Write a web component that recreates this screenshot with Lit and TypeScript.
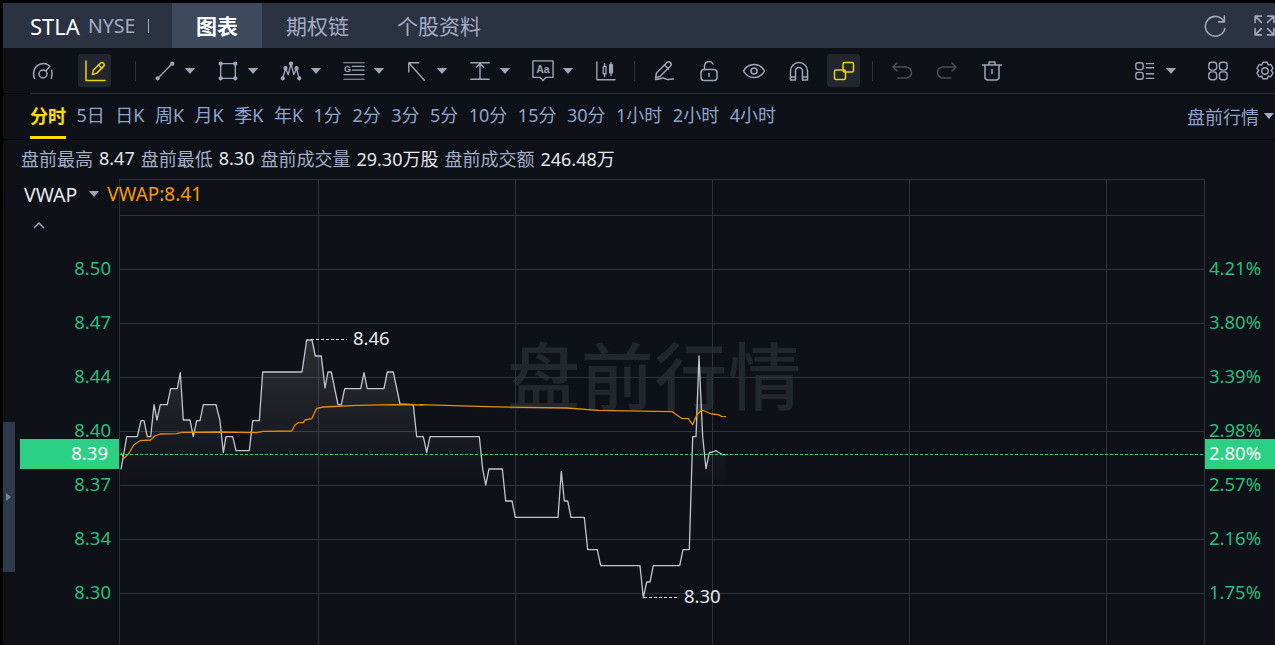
import { LitElement, html, css, svg } from "lit";
import { customElement } from "lit/decorators.js";

const z4 = (p: number[][]) => p.map(([x, y]) => [110 + x / 3, 330 + y / 3]);
const z5 = (p: number[][]) => p.map(([x, y]) => [420 + x / 3, 400 + y / 3]);
const pts = (p: number[][]) => p.map(([x, y]) => `${x.toFixed(1)},${y.toFixed(1)}`).join(" ");

const WHITE = [
  ...z4([[33,418],[50,320],[82,320],[93,272],[102,272],[112,320],[122,320],[132,224],[141,270],[151,224],[172,224],[182,176],[202,176],[211,128],[220,270],[240,270],[250,320],[260,272],[270,272],[280,224],[318,224],[330,272],[340,368],[348,320],[368,320],[378,362],[418,362],[428,272],[448,272],[458,126],[576,126],[590,30],[606,30],[616,78],[634,78],[645,174],[654,126],[664,126],[684,224],[694,224],[704,176],[752,176],[762,128],[772,176],[822,176],[832,126],[850,126],[870,222],[910,224],[920,320],[940,320]]),
  ...z5([[20,158],[30,110],[178,110],[188,207],[197,255],[207,207],[247,207],[257,303],[276,303],[286,352],[414,352],[424,214],[433,303],[443,303],[453,352],[493,352],[503,449],[532,449],[542,497],[660,497],[670,593],[680,546],[690,546],[700,497],[779,497],[789,449],[808,449],[818,110],[828,110],[837,-132],[848,110],[858,206],[868,158],[878,156],[888,152],[898,158],[908,164],[918,164]]),
];
const ORANGE = [
  ...z4([[33,368],[42,385],[55,372],[72,344],[90,332],[122,330],[135,318],[150,312],[200,311],[215,307],[330,306],[440,308],[460,304],[545,303],[555,285],[565,278],[580,278],[585,270],[605,266],[620,235],[640,231],[740,226],[850,224],[940,225]]),
  ...z5([[0,14],[200,20],[440,24],[535,31],[757,35],[770,45],[785,55],[805,56],[818,74],[830,45],[845,30],[875,42],[895,44],[905,49],[918,50]]),
];
const H_LINES = [179, 215, 269, 323, 377, 431, 485, 539, 593];
const V_LINES = [119.5, 318.5, 515.5, 712.5, 909.5, 1106.5, 1204.5];
const LEFT = [["8.50",269],["8.47",323],["8.44",377],["8.40",431],["8.37",485],["8.34",539],["8.30",593]] as const;
const RIGHT = [["4.21%",269],["3.80%",323],["3.39%",377],["2.98%",431],["2.57%",485],["2.16%",539],["1.75%",593]] as const;
const PERIODS = ["5日","日K","周K","月K","季K","年K","1分","2分","3分","5分","10分","15分","30分","1小时","2小时","4小时"];
const INFO = [["盘前最高","8.47"],["盘前最低","8.30"],["盘前成交量","29.30万股"],["盘前成交额","246.48万"]];

const ic = (body: unknown, cls = "") => html`<svg class="ic ${cls}" viewBox="0 0 24 24" fill="none" stroke="currentColor" stroke-width="1.5" stroke-linecap="round" stroke-linejoin="round">${body}</svg>`;

const I = {
  gauge: svg`<path d="M3.5 19.5C1 14 3.5 7 9 5.2 12 4.2 16 4.8 18 6.5M20.5 11c1 3 .8 6-.2 8.5"/><circle cx="12" cy="15" r="4"/><path d="M15 12l4-5"/>`,
  draw: svg`<path d="M3 2v19.500h19"/><path d="M9.500 15.500l.8-4.300 7-7c1-1 2.200-1 3.200 0s1 2.200 0 3.200l-7 7z"/><path d="M15.500 6l3.500 3.500"/>`,
  line: svg`<path d="M5 19L19 5"/><circle cx="4" cy="20" r="1.600" fill="currentColor"/><circle cx="20" cy="4" r="1.600" fill="currentColor"/>`,
  rect: svg`<path d="M4 4h16v16H4z"/><circle cx="4" cy="4" r="1.600" fill="currentColor"/><circle cx="20" cy="4" r="1.600" fill="currentColor"/><circle cx="4" cy="20" r="1.600" fill="currentColor"/><circle cx="20" cy="20" r="1.600" fill="currentColor"/>`,
  zig: svg`<path d="M3 20L6 9l3 7 3-12 3 12 3-7 3 11"/><circle cx="3" cy="20" r="1.600" fill="currentColor"/><circle cx="6" cy="9" r="1.600" fill="currentColor"/><circle cx="12" cy="4" r="1.600" fill="currentColor"/><circle cx="18" cy="9" r="1.600" fill="currentColor"/><circle cx="21" cy="20" r="1.600" fill="currentColor"/>`,
  fib: svg`<text x="1" y="13" font-size="10" font-weight="700" fill="currentColor" stroke="none" font-family="Liberation Sans, sans-serif">G</text><path stroke-width="1.200" d="M1 3h22M10 7h13M10 11h13M1 16h22M1 21h22"/>`,
  arrow: svg`<path d="M3 3l17 19M3 3v10M3 3h11"/>`,
  height: svg`<path d="M2 3h20M2 21h20M12 4v17M8 8l4-4 4 4" />`,
  aa: svg`<path d="M1 1h22v18h-8l-3 3.500-3-3.500H1z"/><text x="12" y="14.500" text-anchor="middle" font-size="11.500" font-weight="700" fill="currentColor" stroke="none" font-family="Liberation Sans, sans-serif">Aa</text>`,
  candle: svg`<path d="M2 2v19.500h20"/><path d="M9 7h3v8H9zM10.500 4v3M10.500 15v3"/><path d="M16 5h3v9h-3z" fill="currentColor"/><path d="M17.500 3v2M17.500 14v3"/>`,
  pen: svg`<path d="M3.500 19l1-5L15 3.500c1-1 2.500-1 3.500 0s1 2.500 0 3.500L8 17.500z"/><path d="M12.500 6l4 4M3.500 20.500c3 0 5-1 7-1.500s3 1.500 5 1.500 4-.5 6-.5"/>`,
  lock: svg`<rect x="4" y="10.500" width="16" height="11" rx="3"/><path d="M7.500 10.500V7a4.500 4.500 0 0 1 8.500-2M12 14.500v3"/>`,
  eye: svg`<path d="M1.500 12C4 7.500 8 5.500 12 5.500s8 2 10.500 6.500C20 16.500 16 18.500 12 18.500S4 16.500 1.500 12z"/><circle cx="12" cy="12" r="3"/>`,
  magnet: svg`<path d="M3.500 21V12a8.500 8.500 0 0 1 17 0v9h-5v-9a3.500 3.500 0 0 0-7 0v9z"/><path d="M3.500 18h5M15.500 18h5"/>`,
  link: svg`<rect x="2.500" y="11" width="11" height="9.500" rx="1.500"/><rect x="11" y="3.500" width="10.500" height="9.500" rx="1.500"/>`,
  undo: svg`<path d="M7 4L3 8l4 4M3 8h13a5.500 5.500 0 0 1 0 11H8"/>`,
  redo: svg`<path d="M17 4l4 4-4 4M21 8H8a5.500 5.500 0 0 0 0 11h8"/>`,
  trash: svg`<path d="M2.500 6h19M9 6V3h6v3M5 6v12a3 3 0 0 0 3 3h8a3 3 0 0 0 3-3V6M12 10.500v4"/>`,
  layout: svg`<rect x="2" y="3" width="8" height="7.500" rx="2.500"/><rect x="2" y="13.500" width="8" height="7.500" rx="2.500"/><path d="M13.500 4h8M13.500 8.500h8M13.500 15h8M13.500 20h8"/>`,
  grid: svg`<rect x="2" y="2.500" width="8.500" height="8.500" rx="3"/><rect x="13.500" y="2.500" width="8.500" height="8.500" rx="3"/><rect x="2" y="13" width="8.500" height="8.500" rx="3"/><rect x="13.500" y="13" width="8.500" height="8.500" rx="3"/>`,
  gear: svg`<path d="M9.500 2.500h5l1 3 2.800-.8 2.500 4.300-2 2.500 2 2.500-2.500 4.300-2.800-.8-1 3h-5l-1-3-2.800.8-2.500-4.300 2-2.500-2-2.500 2.500-4.300 2.800.8z"/><circle cx="12" cy="12" r="3.500"/>`,
  refresh: svg`<path d="M20 8A9.500 9.500 0 1 0 21 15"/><path d="M20.500 3v5.500h-5.500"/>`,
  full: svg`<path d="M3 9V3h6M3 3l6 6M21 9V3h-6M21 3l-6 6M3 15v6h6M3 21l6-6M21 15v6h-6M21 21l-6-6"/>`,
};

@customElement("app-root")
export class AppRoot extends LitElement {
  static styles = css`
    :host {
      display: block; height: 645px; width: 1275px; overflow: hidden; box-sizing: border-box;
      background: #000; padding: 3px 0 0 3px;
      font-family: "Noto Sans", "Noto Sans CJK SC", sans-serif; color: #a4adc6;
    }
    .header { display: flex; align-items: center; height: 45px; background: #2b3241; position: relative; overflow: hidden; }
    .sym { color: #fff; font-size: 22px; width: 50px; margin-left: 27px; white-space: nowrap; }
    .ex { font-size: 19.5px; width: 45px; color: #a4adc6; margin-left: 8px; white-space: nowrap; }
    .bar { width: 1px; height: 14px; background: #a4adc6; margin: 0 23px 0 15px; }
    .tab { height: 45px; display: flex; align-items: center; padding: 0 24px 2px; box-sizing: border-box; font-size: 21px; color: #a4adc6; }
    .tab.on { background: #3d4a5e; color: #fff; font-weight: 700; }
    .hr { margin-left: auto; display: flex; align-items: center; gap: 24px; margin-right: -2px; color: #a4a9ba; }
    .hr .ic { width: 25px; height: 25px; }
    .tools { display: flex; align-items: center; height: 45px; background: #0e1117; padding-left: 23px; color: #a0a5b8; overflow: hidden; }
    .ic { width: 24px; height: 24px; flex: none; display: block; }
    .btn { width: 33px; height: 33px; border-radius: 3px; display: flex; align-items: center; justify-content: center; flex: none; margin-right: 12px; }
    .btn.on { background: #22262e; color: #eed400; }
    .btn.dim { color: #4a4e58; }
    .gauge { margin-right: 19px; }
    .draw-btn { margin-right: 0; }
    .sep { width: 1px; height: 20px; background: #2c303a; flex: none; margin: 0 18px 0 24px; }
    .sep.s2 { margin: 0 12px 0 0; }
    .sep.s4 { margin: 0 12px 0 17px; }
    .grp { display: flex; align-items: center; width: 63px; flex: none; }
    .grp.solo { width: auto; }
    .grp .ic { width: 22px; height: 22px; }
    .caret { width: 0; height: 0; border-left: 5.5px solid transparent; border-right: 5.5px solid transparent; border-top: 6px solid #a0a5b8; margin-left: 9px; flex: none; }
    .right { margin-left: auto; display: flex; align-items: center; margin-right: -1px; }
    .right .grp { width: 73px; }
    .right .caret { margin-left: 10px; }
    .right .ic { width: 22px; height: 22px; }
    .right .grid-i { margin-right: 25px; }
    .rule { height: 1px; background: #2c3038; margin-left: 27px; }
    .periods { display: flex; align-items: stretch; height: 45px; background: #0e1117; padding-left: 27px; font-size: 18px; gap: 10.5px; color: #8ea4cc; box-sizing: border-box; }
    .p { display: flex; align-items: center; height: 42px; padding-bottom: 2px; box-sizing: border-box; white-space: nowrap; }
    .p.on { color: #ffdf00; font-weight: 700; border-bottom: 3px solid #ffdf00; height: 45px; padding-bottom: 0; }
    .mode { margin-left: auto; display: flex; align-items: center; height: 42px; gap: 5px; padding-right: 1px; padding-top: 2px; box-sizing: border-box; }
    .mode .caret { margin: 0; border-top-color: #a4adc6; }
    .mainwrap { height: 505px; background: #0e1117; border-top: 1px solid #000; position: relative; overflow: hidden; }
    .info { display: flex; gap: 6px; align-items: center; height: 36px; padding-left: 18px; font-size: 18px; color: #a4adc6; white-space: nowrap; position: relative; }
    .info b { font-weight: 400; color: #e6e8ee; }
    .legend { position: absolute; left: 21px; top: 39px; display: flex; align-items: center; font-size: 19.5px; height: 30px; color: #e6e8ee; }
    .legend .caret { margin: 0 8px 0 12px; }
    .legend .o { color: #f59a00; font-size: 19px; }
    .chev { position: absolute; left: 30px; top: 81px; width: 12px; height: 8px; color: #a0a5b8; }
    .handle { position: absolute; left: 0; top: 282px; width: 12px; height: 150px; background: #2d3a4b; display: flex; align-items: center; }
    .handle i { display: block; border-left: 5px solid #7c8695; border-top: 4.500px solid transparent; border-bottom: 4.500px solid transparent; margin-left: 3px; }
    .chart { position: absolute; left: 0; top: 0; width: 1272px; height: 505px; display: block; }
    .chart text { font-family: "Noto Sans", "Noto Sans CJK SC", sans-serif; font-size: 18.5px; }
    .chart .wm { font-size: 73px; fill: #22262d; font-weight: 500; }
    .ax { fill: #2bbd7e; }
    .ext { fill: #e6e8ee; }
    .tag { fill: #fff; }
  `;

  private group(icon: unknown) {
    return html`<div class="grp">${ic(icon)}<span class="caret"></span></div>`;
  }

  render() {
    const area = `${WHITE[0][0]},645 ${pts(WHITE)} ${WHITE[WHITE.length - 1][0]},645`;
    return html`
      <div class="header">
        <span class="sym">STLA</span><span class="ex">NYSE</span><span class="bar"></span>
        <span class="tab on">图表</span><span class="tab">期权链</span><span class="tab">个股资料</span>
        <div class="hr">${ic(I.refresh)}${ic(I.full)}</div>
      </div>
      <div class="tools">
        <div class="btn gauge">${ic(I.gauge)}</div>
        <div class="btn on draw-btn">${ic(I.draw)}</div>
        <span class="sep"></span>
        ${this.group(I.line)}${this.group(I.rect)}${this.group(I.zig)}${this.group(I.fib)}
        ${this.group(I.arrow)}${this.group(I.height)}${this.group(I.aa)}
        <div class="grp solo">${ic(I.candle)}</div>
        <span class="sep s4"></span>
        <div class="btn">${ic(I.pen)}</div><div class="btn">${ic(I.lock)}</div><div class="btn">${ic(I.eye)}</div>
        <div class="btn">${ic(I.magnet)}</div><div class="btn on">${ic(I.link)}</div>
        <span class="sep s2"></span>
        <div class="btn dim">${ic(I.undo)}</div><div class="btn dim">${ic(I.redo)}</div><div class="btn">${ic(I.trash)}</div>
        <div class="right">
          <div class="grp">${ic(I.layout)}<span class="caret"></span></div>
          ${ic(I.grid, "grid-i")}${ic(I.gear)}
        </div>
      </div>
      <div class="rule"></div>
      <div class="periods">
        <span class="p on">分时</span>
        ${PERIODS.map((p) => html`<span class="p">${p}</span>`)}
        <span class="mode">盘前行情<span class="caret"></span></span>
      </div>
      <div class="mainwrap">
        <svg class="chart" viewBox="3 140 1272 505">
          <defs>
            <linearGradient id="g" gradientUnits="userSpaceOnUse" x1="0" y1="340" x2="0" y2="490">
              <stop offset="0" stop-color="#fff" stop-opacity=".12"/>
              <stop offset="1" stop-color="#fff" stop-opacity="0"/>
            </linearGradient>
          </defs>
          <text class="wm" x="507" y="404" textLength="294">盘前行情</text>
          ${H_LINES.map((y) => svg`<line x1="119" x2="1204" y1=${y + 0.5} y2=${y + 0.5} stroke="#2d323d"/>`)}
          ${V_LINES.map((x) => svg`<line x1=${x} x2=${x} y1="179" y2="645" stroke="#2d323d"/>`)}
          <polygon points=${area} fill="url(#g)"/>
          <polyline points=${pts(WHITE)} fill="none" stroke="#c3c6cb" stroke-width="1.300" stroke-linejoin="round"/>
          <polyline points=${pts(ORANGE)} fill="none" stroke="#e88f00" stroke-width="1.300" stroke-linejoin="round"/>
          <line x1="120" x2="1204" y1="454.500" y2="454.500" stroke="#2bd084" stroke-dasharray="3 2"/>
          <line x1="311" x2="347" y1="339.500" y2="339.500" stroke="#e6e8ee" stroke-dasharray="3 2"/>
          <line x1="644" x2="678" y1="597.500" y2="597.500" stroke="#e6e8ee" stroke-dasharray="3 2"/>
          <text class="ext" x="353" y="345">8.46</text>
          <text class="ext" x="684" y="603">8.30</text>
          ${LEFT.map(([t, y]) => svg`<text class="ax" x="111" y=${y + 6} text-anchor="end">${t}</text>`)}
          ${RIGHT.map(([t, y]) => svg`<text class="ax" x="1209" y=${y + 6}>${t}</text>`)}
          <rect x="20" y="439" width="99" height="30" fill="#2bd084"/>
          <rect x="1205" y="439" width="70" height="30" fill="#2bd084"/>
          <text class="tag" x="108" y="460" text-anchor="end">8.39</text>
          <text class="tag" x="1209" y="460">2.80%</text>
        </svg>
        <div class="info">
          ${INFO.map(([k, v]) => html`<span>${k}</span><b>${v}</b>`)}
        </div>
        <div class="legend"><span>VWAP</span><span class="caret"></span><span class="o">VWAP:8.41</span></div>
        <svg class="chev" viewBox="0 0 12 8" fill="none" stroke="currentColor" stroke-width="1.500"><path d="M1 7l5-5 5 5"/></svg>
        <div class="handle"><i></i></div>
      </div>
    `;
  }
}
